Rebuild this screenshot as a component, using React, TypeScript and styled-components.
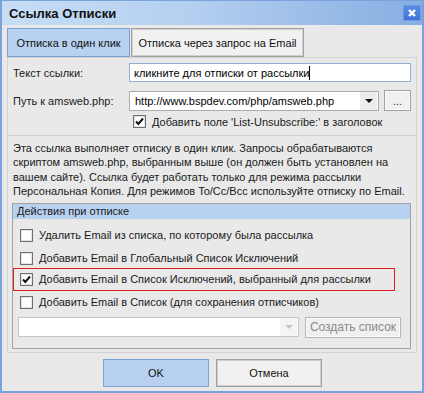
import React from "react";
import styled, { createGlobalStyle } from "styled-components";

const Global = createGlobalStyle`
  html, body { margin: 0; padding: 0; background: #e9e9e9; }
  body { font-family: "Liberation Sans", Arial, sans-serif; font-size: 11px; color: #1a1a1a; }
  * { box-sizing: border-box; }
`;

const Window = styled.div`
  width: 424px;
  height: 393px;
  border: 2px solid #7aa3dd;
  border-top: 1px solid #7aa3dd;
  background: #e9e9e9;
  display: flex;
  flex-direction: column;
  overflow: hidden;
`;

const TitleBar = styled.div`
  height: 24px;
  flex: none;
  display: flex;
  align-items: center;
  justify-content: space-between;
  padding: 0 1px 0 7px;
  background: linear-gradient(90deg, #c6ddf5 0%, #b4cff0 45%, #86aee2 100%);
`;

const Title = styled.div`
  font-weight: bold;
  font-size: 13px;
  color: #111;
`;

const CloseBtn = styled.div`
  width: 18px;
  height: 16px;
  margin-bottom: 1px;
  background: linear-gradient(180deg, #5a8ce6 0%, #3f72d9 100%);
  border: 1px solid #6f9ae6;
  display: flex;
  align-items: center;
  justify-content: center;
`;

const Body = styled.div`
  flex: 1;
  display: flex;
  flex-direction: column;
  padding: 3px 5px 0 5px;
`;

const TabRow = styled.div`
  display: flex;
  height: 29px;
`;

const Tab = styled.div<{ $active?: boolean; $w: number }>`
  width: ${(p) => p.$w}px;
  height: 29px;
  display: flex;
  align-items: center;
  justify-content: center;
  color: #111;
  background: ${(p) => (p.$active ? "#b8d1f0" : "#f1f1f1")};
  border: 1px solid ${(p) => (p.$active ? "#7c9fd4" : "#a3a3a3")};
  box-shadow: ${(p) => (p.$active ? "none" : "inset 0 0 0 1px #d0d0d0")};
  margin-right: 1px;
`;

const Panel = styled.div`
  border: 1px solid #d2d2d2;
  height: 296px;
  flex: none;
  display: flex;
  flex-direction: column;
`;

const FieldRow = styled.div<{ $top: number }>`
  display: flex;
  align-items: center;
  margin-top: ${(p) => p.$top}px;
  padding: 0 5px 0 5px;
`;

const Label = styled.div`
  width: 116px;
  flex: none;
`;

const TextInput = styled.div`
  width: 282px;
  height: 19px;
  background: #fff;
  border: 1px solid #8faed6;
  display: flex;
  align-items: center;
  padding-left: 4px;
  color: #000;
`;

const Caret = styled.span`
  display: inline-block;
  width: 1px;
  height: 14px;
  background: #000;
`;

const Combo = styled.div<{ $w: number; $disabled?: boolean }>`
  width: ${(p) => p.$w}px;
  height: 20px;
  background: #fff;
  border: 1px solid ${(p) => (p.$disabled ? "#c4c4c4" : "#ababab")};
  display: flex;
  align-items: center;
  color: #000;
`;

const ComboText = styled.div`
  flex: 1;
  padding-left: 5px;
  white-space: nowrap;
  overflow: hidden;
`;

const ComboArrow = styled.div<{ $disabled?: boolean }>`
  width: 17px;
  height: 18px;
  margin-right: 1px;
  background: ${(p) => (p.$disabled ? "#f4f4f4" : "#ececec")};
  display: flex;
  align-items: center;
  justify-content: center;
  &::after {
    content: "";
    border-left: 4px solid transparent;
    border-right: 4px solid transparent;
    border-top: 4px solid ${(p) => (p.$disabled ? "#c8c8c8" : "#111")};
  }
`;

const SmallButton = styled.div<{ $w: number; $disabled?: boolean }>`
  width: ${(p) => p.$w}px;
  height: 21px;
  background: #f0f0f0;
  border: 1px solid ${(p) => (p.$disabled ? "#b7b7b7" : "#a3a3a3")};
  box-shadow: inset 0 0 0 1px #fbfbfb;
  color: ${(p) => (p.$disabled ? "#8a8a8a" : "#333")};
  display: flex;
  align-items: center;
  justify-content: center;
  font-size: ${(p) => (p.$disabled ? "12px" : "11px")};
`;

const CheckRow = styled.label<{ $indent: number; $top: number }>`
  display: flex;
  align-items: center;
  padding-left: ${(p) => p.$indent}px;
  margin-top: ${(p) => p.$top}px;
  height: 15px;
  gap: 6px;
  white-space: nowrap;
`;

const Box = styled.span`
  width: 13px;
  height: 13px;
  flex: none;
  background: #fff;
  border: 1px solid #6f6f6f;
  box-shadow: inset 0 0 0 1px #e4e4e4;
  display: flex;
  align-items: center;
  justify-content: center;
`;

const Separator = styled.div`
  height: 1px;
  background: #cdcdcd;
  margin-top: 6px;
`;

const Description = styled.div`
  padding: 5px 5px 0 5px;
  line-height: 14.4px;
  font-size: 11px;
  white-space: nowrap;
  color: #1a1a1a;
`;

const Group = styled.div`
  margin: 4px 5px 0 4px;
  border: 1px solid #a2a2a2;
  height: 146px;
  display: flex;
  flex-direction: column;
`;

const GroupHeader = styled.div`
  height: 15px;
  background: #b8d1f0;
  padding-left: 4px;
  display: flex;
  align-items: center;
  color: #1a1a1a;
  font-size: 11px;
`;

const Highlight = styled.div`
  margin: 2px 15px 0 0;
  height: 23px;
  border: 1px solid #e02020;
  display: flex;
  align-items: center;
`;

const ListRow = styled.div`
  display: flex;
  align-items: center;
  justify-content: space-between;
  margin-top: 7px;
  padding: 0 9px 0 5px;
`;

const Footer = styled.div`
  display: flex;
  justify-content: center;
  gap: 7px;
  margin-top: 6px;
  padding-left: 1px;
`;

const DialogButton = styled.div<{ $primary?: boolean }>`
  width: 106px;
  height: 28px;
  display: flex;
  align-items: center;
  justify-content: center;
  color: #111;
  background: ${(p) => (p.$primary ? "#b8d1f0" : "#f1f1f1")};
  border: 1px solid ${(p) => (p.$primary ? "#7c9fd4" : "#9f9f9f")};
  box-shadow: ${(p) => (p.$primary ? "none" : "inset 0 0 0 1px #cfcfcf")};
`;

const Check = () => (
  <svg width="11" height="11" viewBox="0 0 11 11">
    <path d="M2 5.5 L4.3 8 L9 2.5" fill="none" stroke="#111" strokeWidth="2" />
  </svg>
);

const CheckBox: React.FC<{ checked?: boolean; label: string; indent: number; top: number }> = ({
  checked,
  label,
  indent,
  top,
}) => (
  <CheckRow $indent={indent} $top={top}>
    <Box>{checked && <Check />}</Box>
    <span>{label}</span>
  </CheckRow>
);

export default function App() {
  return (
    <>
      <Global />
      <Window>
        <TitleBar>
          <Title>Ссылка Отписки</Title>
          <CloseBtn>
            <svg width="10" height="10" viewBox="0 0 10 10">
              <path d="M2 2 L8 8 M8 2 L2 8" stroke="#fff" strokeWidth="2.4" />
            </svg>
          </CloseBtn>
        </TitleBar>
        <Body>
          <TabRow>
            <Tab $active $w={123}>Отписка в один клик</Tab>
            <Tab $w={173}>Отписка через запрос на Email</Tab>
          </TabRow>
          <Panel>
            <FieldRow $top={5}>
              <Label>Текст ссылки:</Label>
              <TextInput>
                кликните для отписки от рассылки<Caret />
              </TextInput>
            </FieldRow>
            <FieldRow $top={8}>
              <Label>Путь к amsweb.php:</Label>
              <Combo $w={250}>
                <ComboText>http://www.bspdev.com/php/amsweb.php</ComboText>
                <ComboArrow />
              </Combo>
              <SmallButton $w={27} style={{ marginLeft: 5 }}>
                ...
              </SmallButton>
            </FieldRow>
            <CheckBox checked indent={125} top={3} label="Добавить поле 'List-Unsubscribe:' в заголовок" />
            <Separator />
            <Description>
              Эта ссылка выполняет отписку в один клик. Запросы обрабатываются
              <br />
              скриптом amsweb.php, выбранным выше (он должен быть установлен на
              <br />
              вашем сайте). Ссылка будет работать только для режима рассылки
              <br />
              Персональная Копия. Для режимов To/Cc/Bcc используйте отписку по Email.
            </Description>
            <Group>
              <GroupHeader>Действия при отписке</GroupHeader>
              <CheckBox indent={7} top={9} label="Удалить Email из списка, по которому была рассылка" />
              <CheckBox indent={7} top={8} label="Добавить Email в Глобальный Список Исключений" />
              <Highlight>
                <CheckBox checked indent={6} top={0} label="Добавить Email в Список Исключений, выбранный для рассылки" />
              </Highlight>
              <CheckBox indent={7} top={4} label="Добавить Email в Список (для сохранения отписчиков)" />
              <ListRow>
                <Combo $w={281} $disabled>
                  <ComboText />
                  <ComboArrow $disabled />
                </Combo>
                <SmallButton $w={96} $disabled>
                  Создать список
                </SmallButton>
              </ListRow>
            </Group>
          </Panel>
          <Footer>
            <DialogButton $primary>OK</DialogButton>
            <DialogButton>Отмена</DialogButton>
          </Footer>
        </Body>
      </Window>
    </>
  );
}
